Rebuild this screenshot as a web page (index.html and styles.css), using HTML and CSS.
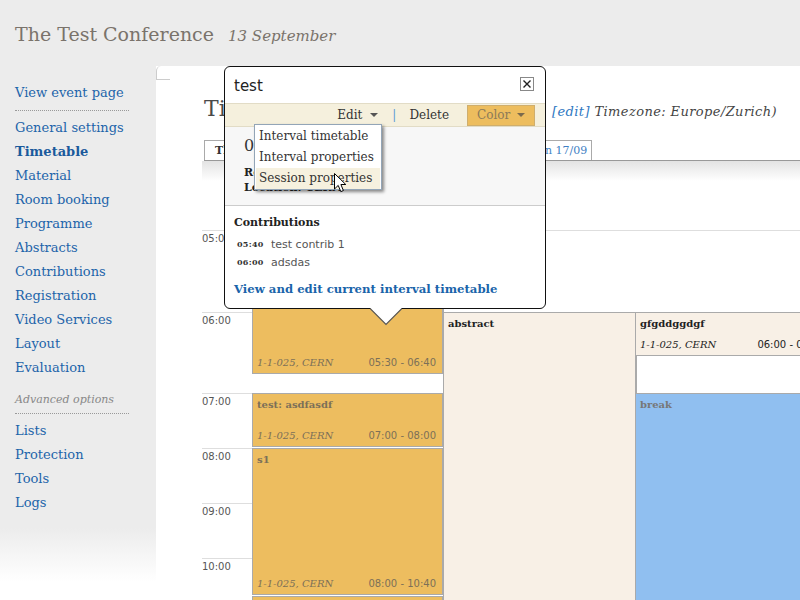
FILE: index.html
```html
<!DOCTYPE html>
<html>
<head>
<meta charset="utf-8">
<title>Timetable</title>
<link rel="stylesheet" href="styles.css">
</head>
<body>
<header class="top">
  <span class="conf-title">The Test Conference</span>
  <span class="conf-date">13 September</span>
</header>
<div class="layout">
  <nav class="side">
    <a href="#">View event page</a>
    <div class="sep"></div>
    <a href="#">General settings</a>
    <a href="#" class="current">Timetable</a>
    <a href="#">Material</a>
    <a href="#">Room booking</a>
    <a href="#">Programme</a>
    <a href="#">Abstracts</a>
    <a href="#">Contributions</a>
    <a href="#">Registration</a>
    <a href="#">Video Services</a>
    <a href="#">Layout</a>
    <a href="#">Evaluation</a>
    <div class="adv">Advanced options</div>
    <a href="#">Lists</a>
    <a href="#">Protection</a>
    <a href="#">Tools</a>
    <a href="#">Logs</a>
  </nav>
  <main class="main">
    <div class="corner"></div>
    <div class="title-row">
      <h1>Timetable</h1>
      <span class="tz"><a href="#">[edit]</a> Timezone: Europe/Zurich)</span>
    </div>
    <div class="tabs">
      <div class="tab sel">Thu 13/09</div>
      <div class="tab">Fri 14/09</div>
      <div class="tab">Sat 15/09</div>
      <div class="tab">Sun 16/09</div>
      <div class="tab">Mon 17/09</div>
    </div>
    <div class="tabshadow"></div>
    <div class="tt">
      <div class="hour h82">05:00</div>
      <div class="hour h81">06:00</div>
      <div class="hour h55">07:00</div>
      <div class="hour h55">08:00</div>
      <div class="hour h55">09:00</div>
      <div class="hour h55">10:00</div>

      <div class="blk sess b-a">
        <span class="blk-title"></span>
        <div class="blk-foot"><span class="loc">1-1-025, CERN</span><span class="tm">05:30 - 06:40</span></div>
      </div>
      <div class="blk sess b-b">
        <span class="blk-title">test: asdfasdf</span>
        <div class="blk-foot"><span class="loc">1-1-025, CERN</span><span class="tm">07:00 - 08:00</span></div>
      </div>
      <div class="blk sess b-c">
        <span class="blk-title">s1</span>
        <div class="blk-foot"><span class="loc">1-1-025, CERN</span><span class="tm">08:00 - 10:40</span></div>
      </div>
      <div class="blk sess b-d"></div>
      <div class="blk abs b-abs">
        <span class="blk-title">abstract</span>
      </div>
      <div class="blk abs b-gfg">
        <span class="blk-title">gfgddggdgf</span>
        <div class="blk-foot"><span class="loc">1-1-025, CERN</span><span class="tm">06:00 - 06:40</span></div>
      </div>
      <div class="blk brk b-brk">
        <span class="blk-title">break</span>
      </div>
    </div>
  </main>
</div>

<div class="popup">
  <div class="pop-head">
    <span class="pop-title">test</span>
    <span class="close"><svg width="10" height="10" viewBox="0 0 10 10"><path d="M1.5 1.5 L8.5 8.5 M8.5 1.5 L1.5 8.5" stroke="#222" stroke-width="1.4"/></svg></span>
  </div>
  <div class="toolbar">
    <span class="tb-edit">Edit<i class="caret"></i></span>
    <span class="tb-pipe">|</span>
    <span class="tb-del">Delete</span>
    <span class="color-btn">Color<i class="caret"></i></span>
  </div>
  <div class="info">
    <div class="bigtime">05:30 - 06:40<span class="editbox"></span></div>
    <div class="meta room">Room: 1-1-025</div>
    <div class="meta">Location: CERN</div>
  </div>
  <div class="contribs">
    <h3>Contributions</h3>
    <ul class="clist">
      <li><span class="ctime">05:40</span><span class="ctitle">test contrib 1</span></li>
      <li><span class="ctime">06:00</span><span class="ctitle">adsdas</span></li>
    </ul>
    <a href="#" class="viewlink">View and edit current interval timetable</a>
  </div>
  <div class="dropdown">
    <div class="dd-item">Interval timetable</div>
    <div class="dd-item">Interval properties</div>
    <div class="dd-item hover">Session properties</div>
  </div>
  <svg class="pop-arrow" width="32" height="18" viewBox="0 0 32 18">
    <polygon points="0,0 16,16.5 32,0" fill="#fff"/>
    <polyline points="0,0.5 16,16.5 32,0.5" fill="none" stroke="#555" stroke-width="1.2"/>
  </svg>
</div>

<svg class="cursor" width="14" height="21" viewBox="0 0 14 21">
  <path d="M0.5 0.5 L0.5 16 L4.2 12.4 L6.8 18.6 L9.4 17.5 L6.9 11.5 L11.8 11.5 Z" fill="#fff" stroke="#000" stroke-width="1"/>
</svg>
</body>
</html>
```

FILE: styles.css
```css
* { box-sizing: border-box; margin: 0; padding: 0; }
html, body { width: 800px; height: 600px; overflow: hidden; }
body {
  position: relative;
  background: #fff;
  font-family: "DejaVu Serif", serif;
  color: #333;
}
a { text-decoration: none; }

/* header */
.top {
  height: 66px;
  background: #ececec;
  padding: 22px 0 0 15px;
  display: flex;
  align-items: baseline;
  gap: 14px;
  line-height: 24px;
}
.conf-title { font-size: 19px; color: #7a736b; }
.conf-date { font-size: 15px; font-style: italic; color: #7a736b; }

/* layout */
.layout { display: flex; height: 534px; }

.side {
  width: 156px;
  flex: none;
  background: linear-gradient(#ececec 0, #ececec 462px, #fff 516px);
  padding: 15px 0 0 15px;
  display: flex;
  flex-direction: column;
}
.side a {
  display: block;
  font-size: 13px;
  line-height: 24px;
  color: #1d64aa;
  white-space: nowrap;
}
.side a.current { font-weight: bold; color: #1a5a9c; }
.sep { width: 114px; border-bottom: 1px dotted #999; margin: 5px 0; }
.adv {
  width: 114px;
  margin: 12px 0 5px;
  padding-bottom: 5px;
  border-bottom: 1px dotted #999;
  font-size: 11px;
  font-style: italic;
  color: #888;
  line-height: 16px;
}

/* main */
.main { flex: 1; position: relative; overflow: hidden; background: #fff; }
.corner {
  width: 14px;
  height: 14px;
  border-left: 1px solid #ccc;
  border-bottom: 1px solid #ccc;
  border-top-left-radius: 5px;
}
.title-row {
  margin: 16px 23px 0 48px;
  display: flex;
  align-items: baseline;
  justify-content: space-between;
}
.title-row h1 { font-size: 22px; font-weight: normal; line-height: 26px; color: #4a4a4a; }
.tz { font-size: 13px; font-style: italic; color: #444; letter-spacing: 0.4px; }
.tz a { color: #2f78c2; }

.tabs {
  display: flex;
  gap: 2px;
  margin: 18px 0 0 48px;
  height: 21px;
  border-bottom: 1px solid #999;
}
.tab {
  width: 76px;
  height: 20px;
  border: 1px solid #aaa;
  border-bottom: none;
  font-size: 11px;
  line-height: 20px;
  padding-left: 10px;
  color: #3f7fc4;
  background: #fff;
}
.tab.sel { font-weight: bold; color: #333; }
.tabshadow {
  margin-left: 46px;
  height: 20px;
  background: linear-gradient(#e3e3e3, #fff);
}

/* timetable */
.tt { position: relative; margin: 49px 0 0 46px; }
.hour {
  border-top: 1px solid #dedede;
  font: 10px "DejaVu Sans", sans-serif;
  color: #555;
  padding-top: 2px;
}
.h82 { height: 82px; }
.h81 { height: 81px; }
.h55 { height: 55px; }

.blk {
  position: absolute;
  border: 1px solid #aaa;
  display: flex;
  flex-direction: column;
  justify-content: space-between;
  padding: 5px 6px 4px 4px;
  font-size: 10px;
}
.blk-title { font-weight: bold; font-size: 10px; line-height: 12px; }
.blk-foot { display: flex; justify-content: space-between; line-height: 12px; white-space: nowrap; }
.loc { font-style: italic; font-size: 10px; }
.tm { font: 10px "DejaVu Sans", sans-serif; }

.sess { background: #edbd5f; color: #7c7058; border-right-width: 2px; }
.abs { background: #f8f0e6; color: #222; border-right-width: 2px; }
.brk { background: #90bff0; color: #777; }

.b-a { left: 50px; top: 40px; width: 192px; height: 104px; }
.b-b { left: 50px; top: 163px; width: 192px; height: 54px; }
.b-c { left: 50px; top: 218px; width: 192px; height: 147px; }
.b-d { left: 50px; top: 366px; width: 192px; height: 60px; }
.b-abs { left: 241px; top: 82px; width: 194px; height: 320px; }
.b-gfg { left: 433px; top: 82px; width: 198px; height: 44px; }
.b-brk { left: 433px; top: 163px; width: 198px; height: 260px; }

/* popup */
.popup {
  position: absolute;
  left: 224px;
  top: 66px;
  width: 322px;
  height: 243px;
  border: 1px solid #111;
  border-radius: 6px;
  background: #fff;
}
.pop-head {
  height: 36px;
  display: flex;
  justify-content: space-between;
  align-items: center;
  padding: 1px 11px 0 9px;
}
.pop-title { font: 15px "DejaVu Sans", sans-serif; color: #222; }
.close {
  width: 14px;
  height: 14px;
  border: 1px solid #888;
  display: flex;
  align-items: center;
  justify-content: center;
  margin-top: -3px;
  background: #fff;
}
.toolbar {
  height: 24px;
  background: #f5f0dd;
  border-top: 1px solid #e2dcc6;
  border-bottom: 1px solid #e2dcc6;
  display: flex;
  align-items: center;
  justify-content: flex-end;
  padding-right: 10px;
  font-size: 12px;
  color: #333;
}
.caret {
  display: inline-block;
  width: 0;
  height: 0;
  border-left: 4px solid transparent;
  border-right: 4px solid transparent;
  border-top: 4px solid #555;
  margin-left: 8px;
  vertical-align: 2px;
}
.tb-edit { margin-right: 14px; }
.tb-pipe { color: #5b9bd5; margin-right: 13px; }
.tb-del { margin-right: 18px; }
.color-btn {
  width: 68px;
  height: 21px;
  background: #edbd5e;
  border: 1px solid #cfae6d;
  color: #8b7a59;
  padding-left: 9px;
  line-height: 19px;
}
.color-btn .caret { border-top-color: #7a6a4c; margin-left: 7px; }

.info {
  height: 79px;
  background: #f7f7f7;
  border-bottom: 1px solid #ccc;
  padding: 9px 0 0 19px;
}
.bigtime { font-size: 16px; line-height: 20px; color: #333; display: flex; align-items: center; }
.editbox { display: inline-block; width: 20px; height: 20px; background: #2a6ebb; margin-left: 10px; }
.meta { font-size: 11px; font-weight: bold; line-height: 15px; color: #222; }
.room { margin-top: 9px; }

.contribs { padding: 8px 0 0 9px; }
.contribs h3 { font-size: 11px; font-weight: bold; line-height: 18px; color: #222; }
.clist { list-style: none; margin-top: 3px; }
.clist li { display: flex; align-items: center; height: 18px; }
.ctime { font-size: 8px; font-weight: bold; color: #333; width: 37px; padding-left: 3px; letter-spacing: 0.3px; }
.ctitle { font: 11px "DejaVu Sans", sans-serif; color: #555; }
.viewlink {
  display: block;
  margin-top: 9px;
  font-size: 11.7px;
  font-weight: bold;
  line-height: 18px;
  color: #1a64aa;
}

.dropdown {
  position: absolute;
  left: 29px;
  top: 57px;
  width: 128px;
  height: 66px;
  background: #fff;
  border: 1px solid #93a5b7;
  box-shadow: 2px 2px 3px rgba(0, 0, 0, 0.45);
  padding: 1px 1px 0;
  font-size: 12px;
  color: #333;
}
.dd-item { line-height: 21px; padding-left: 3px; white-space: nowrap; }
.dd-item.hover { background: #f6f1df; }

.pop-arrow { position: absolute; left: 145px; top: 100%; }

.cursor { position: absolute; left: 334px; top: 173px; }
```
